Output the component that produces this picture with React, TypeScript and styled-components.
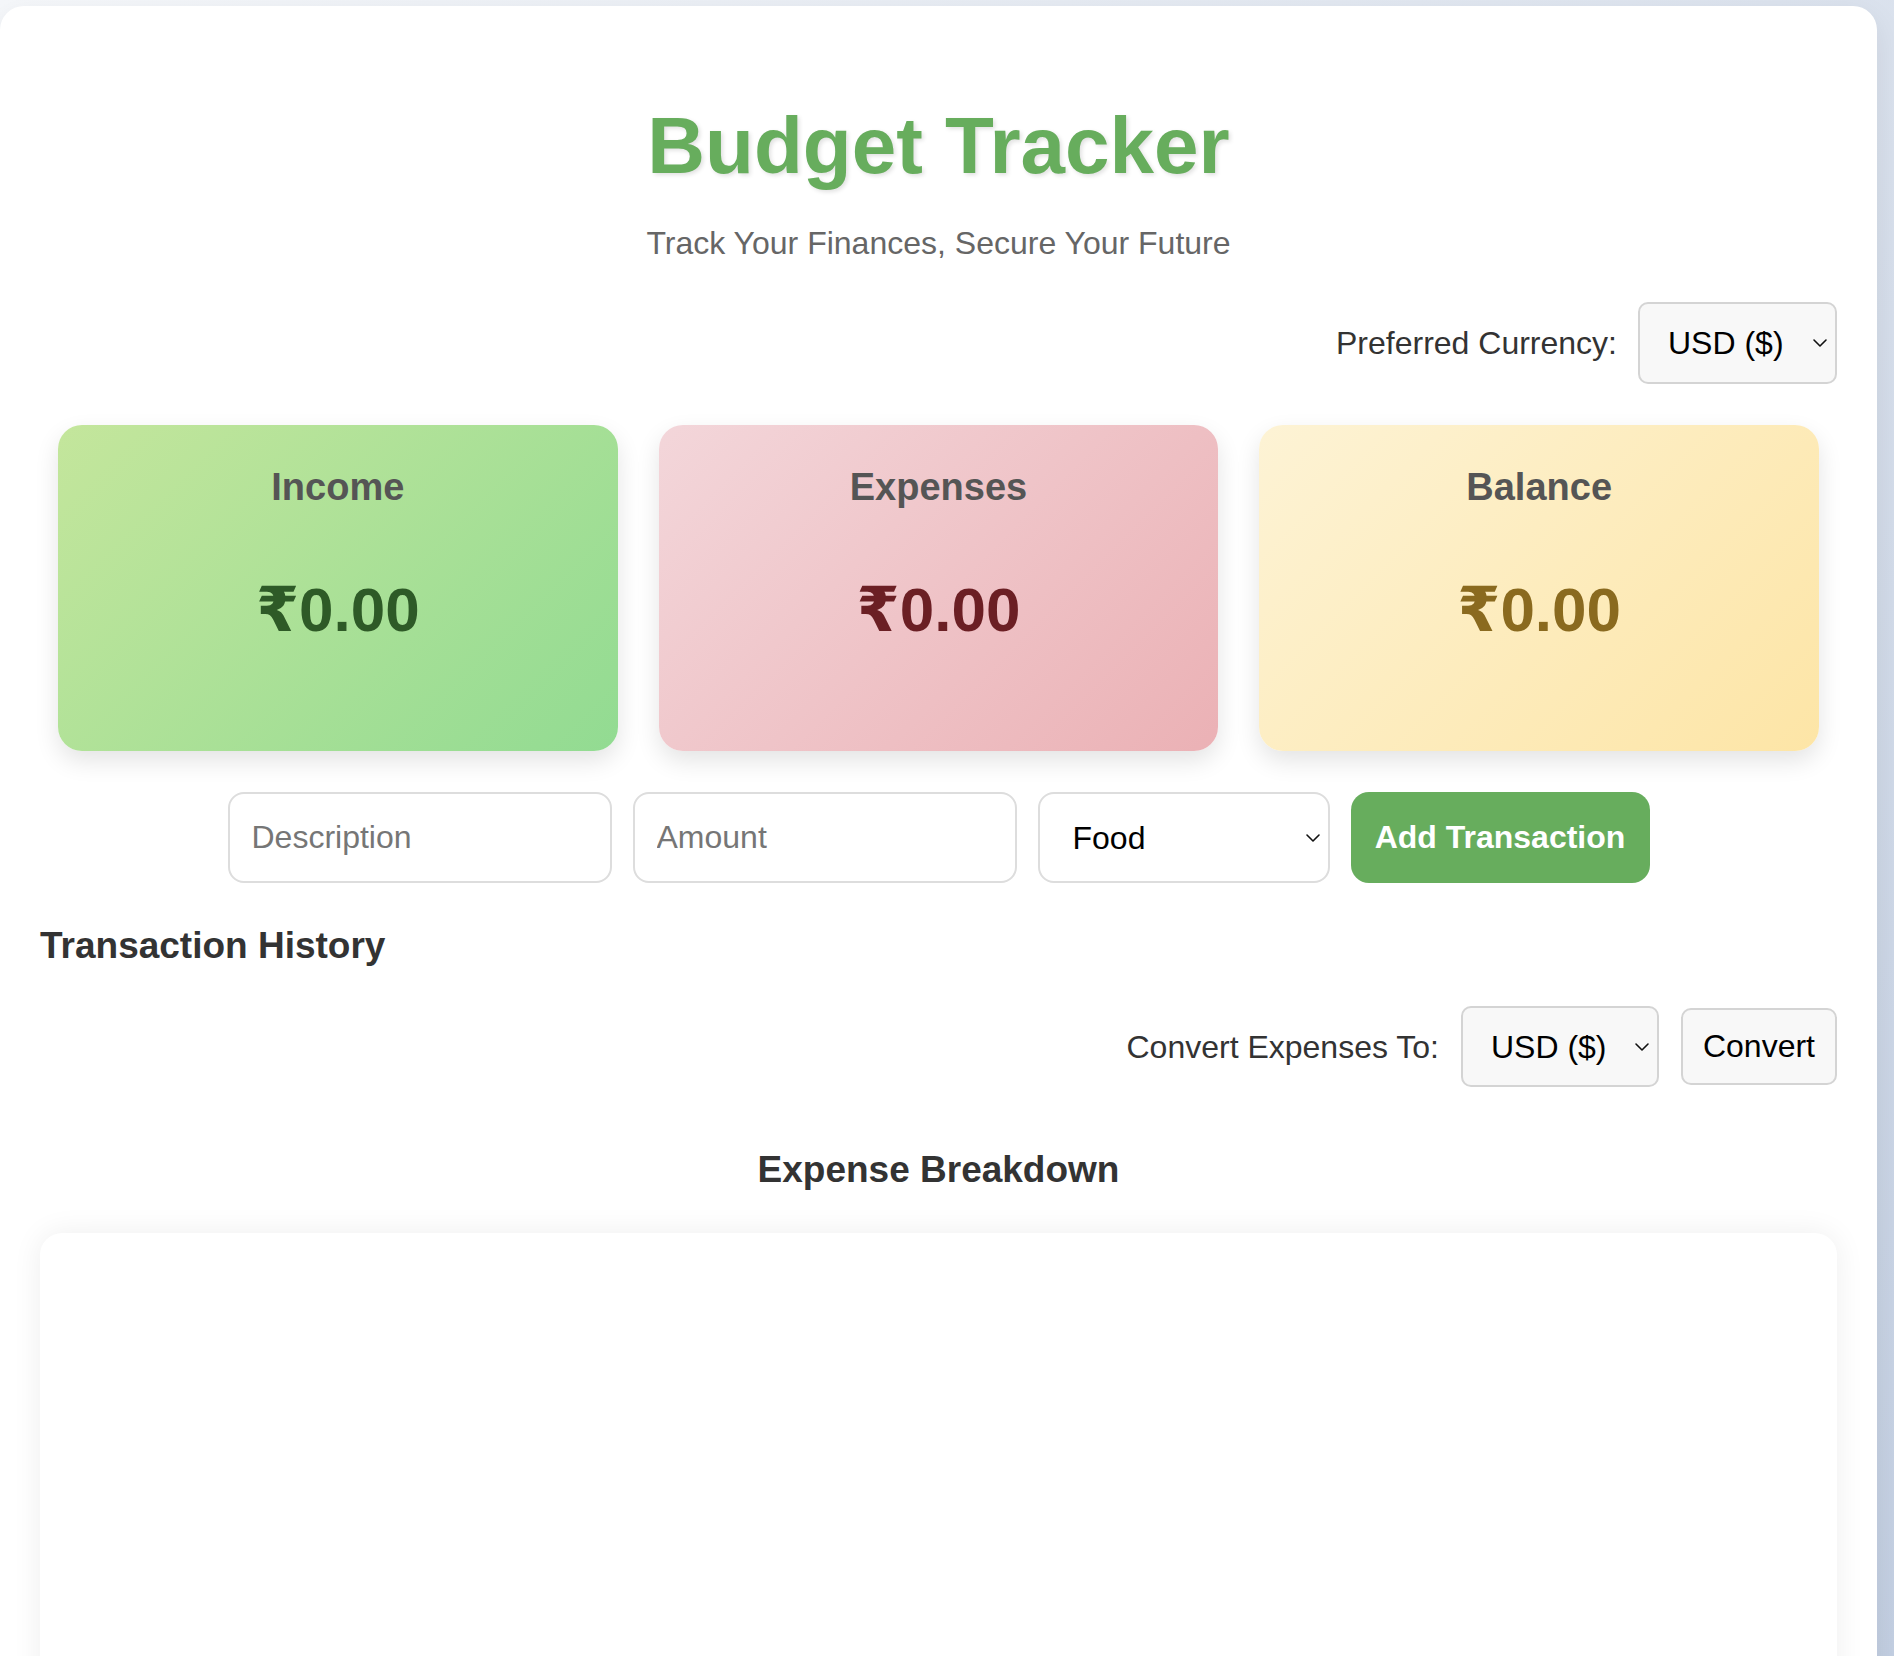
import React from "react";
import styled, { createGlobalStyle } from "styled-components";
import { ChevronDown } from "lucide-react";

const GlobalStyle = createGlobalStyle`
  html, body {
    margin: 0;
    padding: 0;
    min-height: 100%;
  }
  body {
    font-family: "Liberation Sans", Arial, Helvetica, "DejaVu Sans", sans-serif;
    background: linear-gradient(135deg, #f5f7fa 0%, #c3cfe2 100%);
    background-attachment: fixed;
    min-height: 1656px;
  }
  * { box-sizing: border-box; }
`;

const Page = styled.div`
  padding: 6px 17px 0 0;
`;

const Container = styled.main`
  background: #ffffff;
  border-radius: 24px 24px 0 0;
  padding: 94px 40px 80px;
  box-shadow: 0 10px 30px rgba(0, 0, 0, 0.08);
  min-height: 1650px;
`;

const Header = styled.header`
  text-align: center;
`;

const Title = styled.h1`
  margin: 0;
  font-size: 80px;
  line-height: 92px;
  font-weight: 700;
  color: #67ad5d;
  text-shadow: 2px 2px 4px rgba(0, 0, 0, 0.12);
`;

const Subtitle = styled.p`
  margin: 31px 0 0;
  font-size: 32px;
  line-height: 40px;
  color: #666666;
`;

const ControlRow = styled.div<{ $mt: number; $gap: number }>`
  display: flex;
  justify-content: flex-end;
  align-items: center;
  gap: ${(p) => p.$gap}px;
  margin-top: ${(p) => p.$mt}px;
`;

const Label = styled.label`
  font-size: 32px;
  line-height: 40px;
  color: #333333;
`;

const SelectWrap = styled.div`
  position: relative;
  display: inline-flex;
`;

const Chevron = styled.span`
  position: absolute;
  right: 5px;
  top: 50%;
  transform: translateY(-50%);
  display: flex;
  pointer-events: none;
  color: #111;
`;

const CurrencySelect = styled.select<{ $w: number; $h: number }>`
  appearance: none;
  -webkit-appearance: none;
  width: ${(p) => p.$w}px;
  height: ${(p) => p.$h}px;
  padding: 0 40px 0 28px;
  font-family: inherit;
  font-size: 32px;
  color: #000;
  background: #f8f8f8;
  border: 2px solid #d4d4d4;
  border-radius: 10px;
  outline: none;
`;

const PlainButton = styled.button`
  height: 77px;
  padding: 0 20px;
  font-family: inherit;
  font-size: 32px;
  color: #000;
  background: #f8f8f8;
  border: 2px solid #d4d4d4;
  border-radius: 10px;
  cursor: pointer;
`;

const CardGrid = styled.section`
  display: grid;
  grid-template-columns: repeat(3, 1fr);
  gap: 41px;
  padding: 0 18px;
  margin-top: 41px;
`;

const palettes = {
  income: { from: "#c4e69c", to: "#92db92", value: "#2e5a27" },
  expenses: { from: "#f3d6da", to: "#ebb1b5", value: "#6b1f24" },
  balance: { from: "#fdf3d5", to: "#fde5a6", value: "#8a6a1f" },
};

type Kind = keyof typeof palettes;

const Card = styled.div<{ $kind: Kind }>`
  height: 326px;
  padding-top: 40px;
  border-radius: 24px;
  text-align: center;
  background: linear-gradient(
    135deg,
    ${(p) => palettes[p.$kind].from} 0%,
    ${(p) => palettes[p.$kind].to} 100%
  );
  box-shadow: 0 10px 24px rgba(0, 0, 0, 0.11);
`;

const CardTitle = styled.h3`
  margin: 0;
  font-size: 38px;
  line-height: 44px;
  font-weight: 700;
  color: #555555;
`;

const CardValue = styled.p<{ $kind: Kind }>`
  margin: 64px 0 0;
  font-size: 62px;
  line-height: 74px;
  font-weight: 700;
  color: ${(p) => palettes[p.$kind].value};
`;

const FormRow = styled.form`
  display: flex;
  justify-content: center;
  gap: 21px;
  margin-top: 41px;
`;

const TextInput = styled.input`
  width: 384px;
  height: 91px;
  padding: 0 22px;
  font-family: inherit;
  font-size: 32px;
  color: #222;
  background: #fff;
  border: 2px solid #dddddd;
  border-radius: 16px;
  outline: none;
  &::placeholder {
    color: #767676;
  }
`;

const CategorySelect = styled.select`
  appearance: none;
  -webkit-appearance: none;
  width: 292px;
  height: 91px;
  padding: 0 40px 0 33px;
  font-family: inherit;
  font-size: 32px;
  color: #000;
  background: #fff;
  border: 2px solid #dddddd;
  border-radius: 16px;
  outline: none;
`;

const AddButton = styled.button`
  width: 299px;
  height: 91px;
  font-family: inherit;
  font-size: 32px;
  font-weight: 700;
  color: #ffffff;
  background: #67ad5d;
  border: none;
  border-radius: 18px;
  cursor: pointer;
`;

const SectionHeading = styled.h2<{ $mt: number; $center?: boolean }>`
  margin: ${(p) => p.$mt}px 0 0;
  font-size: 37px;
  line-height: 46px;
  font-weight: 700;
  color: #333333;
  text-align: ${(p) => (p.$center ? "center" : "left")};
`;

const ChartBox = styled.div`
  margin-top: 40px;
  height: 480px;
  background: #ffffff;
  border-radius: 22px;
  box-shadow: 0 0 30px rgba(0, 0, 0, 0.07);
`;

const ChevronIcon = () => (
  <Chevron>
    <ChevronDown size={24} strokeWidth={1.6} />
  </Chevron>
);

const cards: { kind: Kind; title: string; value: string }[] = [
  { kind: "income", title: "Income", value: "₹0.00" },
  { kind: "expenses", title: "Expenses", value: "₹0.00" },
  { kind: "balance", title: "Balance", value: "₹0.00" },
];

export default function App() {
  return (
    <>
      <GlobalStyle />
      <Page>
        <Container>
          <Header>
            <Title>Budget Tracker</Title>
            <Subtitle>Track Your Finances, Secure Your Future</Subtitle>
          </Header>

          <ControlRow $mt={39} $gap={21}>
            <Label htmlFor="pref">Preferred Currency:</Label>
            <SelectWrap>
              <CurrencySelect id="pref" $w={199} $h={82} defaultValue="USD">
                <option value="USD">USD ($)</option>
                <option value="INR">INR (₹)</option>
                <option value="EUR">EUR (€)</option>
              </CurrencySelect>
              <ChevronIcon />
            </SelectWrap>
          </ControlRow>

          <CardGrid>
            {cards.map((c) => (
              <Card key={c.kind} $kind={c.kind}>
                <CardTitle>{c.title}</CardTitle>
                <CardValue $kind={c.kind}>{c.value}</CardValue>
              </Card>
            ))}
          </CardGrid>

          <FormRow onSubmit={(e) => e.preventDefault()}>
            <TextInput placeholder="Description" />
            <TextInput placeholder="Amount" />
            <SelectWrap>
              <CategorySelect defaultValue="Food">
                <option>Food</option>
                <option>Transport</option>
                <option>Shopping</option>
                <option>Income</option>
              </CategorySelect>
              <ChevronIcon />
            </SelectWrap>
            <AddButton type="submit">Add Transaction</AddButton>
          </FormRow>

          <SectionHeading $mt={40}>Transaction History</SectionHeading>

          <ControlRow $mt={37} $gap={22}>
            <Label htmlFor="conv">Convert Expenses To:</Label>
            <SelectWrap>
              <CurrencySelect id="conv" $w={198} $h={81} defaultValue="USD">
                <option value="USD">USD ($)</option>
                <option value="INR">INR (₹)</option>
                <option value="EUR">EUR (€)</option>
              </CurrencySelect>
              <ChevronIcon />
            </SelectWrap>
            <PlainButton type="button">Convert</PlainButton>
          </ControlRow>

          <SectionHeading $mt={60} $center>
            Expense Breakdown
          </SectionHeading>

          <ChartBox />
        </Container>
      </Page>
    </>
  );
}
